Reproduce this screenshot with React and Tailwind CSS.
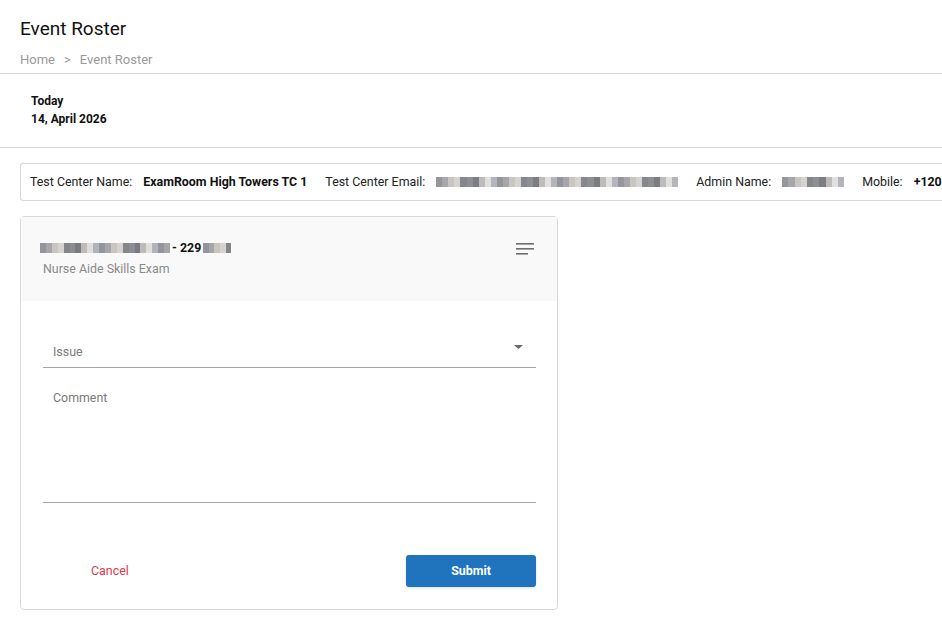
import { useState } from "react";

const font = { fontFamily: "Roboto, 'Liberation Sans', sans-serif" };

// masked values are shown as a strip of blurred tiles
const shades = [
  "bg-[#8a8a90]",
  "bg-[#5e6066]",
  "bg-[#a9a6a4]",
  "bg-[#72747c]",
  "bg-[#c9c6c2]",
  "bg-[#4f5258]",
  "bg-[#9a9ca6]",
  "bg-[#b8b3ad]",
  "bg-[#676a70]",
  "bg-[#d8d6d4]",
];

function Masked({ width, className = "" }) {
  const count = Math.round(width / 6);
  const tiles = Array.from({ length: count }, (_, i) => shades[(i * 7 + 3) % shades.length]);
  return (
    <span className={`inline-flex h-[10px] opacity-75 ${className}`} style={{ width }}>
      {tiles.map((c, i) => (
        <span key={i} className={`h-full flex-1 ${c}`} />
      ))}
    </span>
  );
}

function InfoItem({ label, children }) {
  return (
    <div className="flex items-center gap-[11px] shrink-0">
      <span className="text-[12.4px] text-[#222]">{label}</span>
      {children}
    </div>
  );
}

export default function App() {
  const [issue, setIssue] = useState("");
  const [comment, setComment] = useState("");

  return (
    <div className="w-[942px] h-[626px] overflow-hidden bg-white" style={font}>
      <div className="px-5 pt-[17px] pb-[5px]">
        <h1 className="text-[19px] leading-[24px] text-[#111]">Event Roster</h1>
        <div className="mt-[11px] flex items-center gap-[9px] text-[13px] leading-[16px] text-[#9a9a9a]">
          <span>Home</span>
          <span>&gt;</span>
          <span>Event Roster</span>
        </div>
      </div>
      <div className="h-px bg-[#d4d4d4]" />

      <div className="pl-[31px] pt-[18px] pb-[19px] text-[12px] font-bold leading-[18px] text-[#111]">
        <div>Today</div>
        <div>14, April 2026</div>
      </div>
      <div className="h-px bg-[#d4d4d4]" />

      <div className="pl-5 pt-[15px]">
        <div className="flex h-[38px] items-center gap-[18px] whitespace-nowrap rounded-l-[3px] border border-r-0 border-[#d6d6d6] pl-[9px]">
          <InfoItem label="Test Center Name:">
            <span className="text-[12.4px] font-bold text-[#111]">ExamRoom High Towers TC 1</span>
          </InfoItem>
          <InfoItem label="Test Center Email:">
            <Masked width={242} />
          </InfoItem>
          <InfoItem label="Admin Name:">
            <Masked width={62} />
          </InfoItem>
          <InfoItem label="Mobile:">
            <span className="text-[12.4px] font-bold text-[#111]">+120</span>
          </InfoItem>
        </div>
      </div>

      <div className="ml-5 mt-[15px] w-[538px] rounded-[4px] border border-[#d9d9d9] bg-white">
        <div className="flex items-start justify-between bg-[#f9f9f9] pl-[22px] pr-[22px] pt-[23px] h-[84px]">
          <div>
            <div className="flex items-center gap-[2px] text-[12.4px] leading-[16px] font-bold text-[#111]">
              <Masked width={130} className="-ml-[3px]" />
              <span>- 229</span>
              <Masked width={28} />
            </div>
            <div className="mt-[5px] text-[12.4px] leading-[16px] text-[#8a8a8a]">Nurse Aide Skills Exam</div>
          </div>
          <button className="mt-[3px] mr-[1px] text-[#6e6e6e]" aria-label="Menu">
            <svg width="18" height="12" viewBox="0 0 18 12">
              <rect x="0" y="0" width="18" height="1.6" fill="currentColor" />
              <rect x="0" y="5" width="18" height="1.6" fill="currentColor" />
              <rect x="0" y="10" width="12" height="1.6" fill="currentColor" />
            </svg>
          </button>
        </div>

        <div className="pl-[22px] pr-[21px] pt-[38px]">
          <label className="relative block border-b border-[#a8a3ad] pb-[4px]">
            <select
              value={issue}
              onChange={(e) => setIssue(e.target.value)}
              className="w-full appearance-none bg-transparent pl-[10px] text-[12.4px] leading-[17px] text-[#7a7a7a] outline-none"
            >
              <option value="">Issue</option>
              <option value="late">Late arrival</option>
              <option value="id">ID mismatch</option>
            </select>
            <svg className="pointer-events-none absolute right-[13px] top-[6px]" width="9" height="4" viewBox="0 0 9 4">
              <path d="M0 0h9L4.5 4z" fill="#6a6a6a" />
            </svg>
          </label>

          <div className="mt-[21px] border-b border-[#a8a3ad]">
            <textarea
              value={comment}
              onChange={(e) => setComment(e.target.value)}
              placeholder="Comment"
              className="block h-[113px] w-full resize-none bg-transparent pl-[10px] text-[12.4px] leading-[17px] text-[#222] placeholder:text-[#7a7a7a] outline-none"
            />
          </div>

          <div className="mt-[52px] mb-[22px] flex items-center justify-between">
            <button className="ml-[48px] text-[12.4px] text-[#e0384f]">Cancel</button>
            <button className="h-[32px] w-[130px] rounded-[3px] bg-[#1f74bd] text-[12.4px] font-bold text-white shadow-sm">
              Submit
            </button>
          </div>
        </div>
      </div>
    </div>
  );
}
